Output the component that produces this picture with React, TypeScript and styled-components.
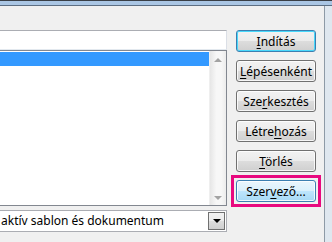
import React from "react";
import styled, { createGlobalStyle } from "styled-components";

const Global = createGlobalStyle`
  html, body { margin: 0; padding: 0; }
  body {
    width: 332px;
    height: 242px;
    overflow: hidden;
    background: #f0f0f0;
    font-family: "Noto Sans", "Open Sans", sans-serif;
  }
`;

const Screen = styled.div`
  width: 332px;
  height: 242px;
  display: flex;
  flex-direction: column;
  overflow: hidden;
`;

const TopBand = styled.div`
  flex: none;
  height: 4px;
  background: #aac6e4;
  border-top: 1px solid #3a3f46;
  border-bottom: 1px solid #5d6f83;
`;

const Body = styled.div`
  flex: 1;
  display: flex;
  min-height: 0;
`;

const Client = styled.div`
  flex: none;
  width: 325px;
  box-sizing: border-box;
  background: #f0f0f0;
  border-right: 1px solid #8e9aa6;
  display: flex;
  align-items: flex-start;
  padding-top: 24px;
`;

const FrameEdge = styled.div`
  flex: 1;
  background: #dfe7ef;
`;

const LeftColumn = styled.div`
  flex: none;
  width: 227px;
  display: flex;
  flex-direction: column;
`;

const TextInput = styled.div`
  height: 20px;
  box-sizing: border-box;
  background: #fff;
  border-top: 1px solid #abadb3;
  border-right: 1px solid #dbdfe6;
  border-bottom: 1px solid #e3e9ef;
`;

const ListBox = styled.div`
  height: 156px;
  box-sizing: border-box;
  background: #fff;
  border-top: 1px solid #828790;
  border-right: 1px solid #828790;
  border-bottom: 1px solid #828790;
  display: flex;
`;

const ListRows = styled.div`
  flex: 1;
  padding-top: 1px;
`;

const ListRow = styled.div<{ $selected?: boolean }>`
  height: 14px;
  background: ${(p) => (p.$selected ? "#3399ff" : "transparent")};
`;

const ScrollBar = styled.div`
  flex: none;
  width: 17px;
  background: linear-gradient(90deg, #e6e6e6, #f7f7f7 40%, #f7f7f7 70%, #ececec);
  border-left: 1px solid #efefef;
  display: flex;
  flex-direction: column;
  justify-content: space-between;
  align-items: center;
  padding: 7px 0 5px;
  box-sizing: border-box;
`;

const Arrow = styled.div<{ $dir: "up" | "down"; $color?: string }>`
  width: 0;
  height: 0;
  border-left: 4px solid transparent;
  border-right: 4px solid transparent;
  ${(p) =>
    p.$dir === "up"
      ? `border-bottom: 4px solid ${p.$color || "#a3a3a3"};`
      : `border-top: 4px solid ${p.$color || "#a3a3a3"};`}
`;

const Combo = styled.div`
  margin-top: 4px;
  height: 22px;
  box-sizing: border-box;
  background: #fff;
  border: 1px solid #abadb3;
  border-left: none;
  display: flex;
  align-items: stretch;
`;

const ComboText = styled.div`
  flex: 1;
  font-size: 12px;
  line-height: 20px;
  color: #000;
  padding-left: 1px;
  white-space: nowrap;
  overflow: hidden;
`;

const ComboButton = styled.div`
  flex: none;
  width: 17px;
  margin: 1px;
  box-sizing: border-box;
  border: 1px solid #707070;
  background: linear-gradient(#f2f2f2 0%, #ebebeb 50%, #dddddd 50%, #cfcfcf 100%);
  display: flex;
  align-items: center;
  justify-content: center;
`;

const ButtonColumn = styled.div`
  flex: none;
  margin-left: 9px;
  display: flex;
  flex-direction: column;
  gap: 8px;
`;

type Variant = "normal" | "default" | "hot";

const Btn = styled.div<{ $variant?: Variant }>`
  width: 80px;
  height: 22px;
  box-sizing: border-box;
  border-radius: 3px;
  border: 1px solid ${(p) => (p.$variant && p.$variant !== "normal" ? "#3c7fb1" : "#707070")};
  background: ${(p) =>
    p.$variant === "hot"
      ? "linear-gradient(#eaf6fd 0%, #d9f0fc 50%, #bee6fd 50%, #a7d9f5 100%)"
      : "linear-gradient(#f2f2f2 0%, #ebebeb 50%, #dddddd 50%, #cfcfcf 100%)"};
  box-shadow: ${(p) =>
    p.$variant === "default"
      ? "inset 0 0 0 1px #48d8fb"
      : "inset 0 0 0 1px rgba(255,255,255,0.8)"};
  display: flex;
  align-items: center;
  justify-content: center;
  font-size: 12px;
  color: #000;
  white-space: nowrap;
  u {
    text-decoration: underline;
    text-underline-offset: 2px;
  }
`;

const Highlight = styled.div`
  margin: -5px;
  padding: 2px;
  border: 3px solid #e8097f;
`;

export default function App() {
  return (
    <>
      <Global />
      <Screen>
        <TopBand />
        <Body>
          <Client>
            <LeftColumn>
              <TextInput />
              <ListBox>
                <ListRows>
                  <ListRow $selected />
                </ListRows>
                <ScrollBar>
                  <Arrow $dir="up" />
                  <Arrow $dir="down" />
                </ScrollBar>
              </ListBox>
              <Combo>
                <ComboText>aktív sablon és dokumentum</ComboText>
                <ComboButton>
                  <Arrow $dir="down" $color="#000" />
                </ComboButton>
              </Combo>
            </LeftColumn>
            <ButtonColumn>
              <Btn $variant="default">
                <span><u>I</u>ndítás</span>
              </Btn>
              <Btn>
                <span><u>L</u>épésenként</span>
              </Btn>
              <Btn>
                <span>Sze<u>r</u>kesztés</span>
              </Btn>
              <Btn>
                <span>Létre<u>h</u>ozás</span>
              </Btn>
              <Btn>
                <span><u>T</u>örlés</span>
              </Btn>
              <Highlight>
                <Btn $variant="hot">
                  <span>Szer<u>v</u>ező...</span>
                </Btn>
              </Highlight>
            </ButtonColumn>
          </Client>
          <FrameEdge />
        </Body>
      </Screen>
    </>
  );
}
